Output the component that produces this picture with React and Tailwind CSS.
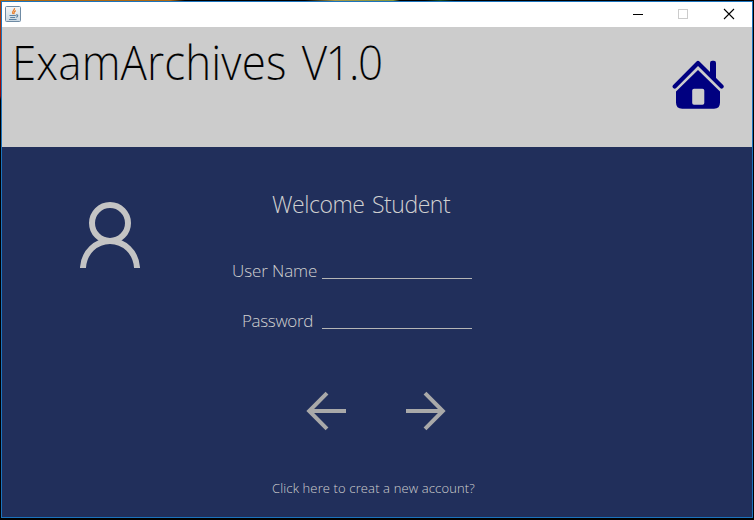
const lightFont = "font-['Open_Sans','Noto_Sans',sans-serif] font-light whitespace-nowrap";

function JavaIcon() {
  return (
    <svg width="16" height="16" viewBox="0 0 16 16" fill="none">
      <defs>
        <linearGradient id="java" x1="0" y1="0" x2="0" y2="1">
          <stop offset="0" stopColor="#f4f6f7" />
          <stop offset="1" stopColor="#c9d7e2" />
        </linearGradient>
      </defs>
      <rect x="0.5" y="0.5" width="15" height="15" rx="1" fill="url(#java)" stroke="#6f8ba4" />
      <path d="M9.5 2.2C10 4.6 6 5 7.8 8M10.8 4.6C8 6 9.8 6.6 8.6 8.2" stroke="#e8802f" strokeWidth="1.3" />
      <path d="M4.5 9.5H10.8M5.2 11.5H10M4 13.5H11.5M11 9C13.6 8.4 13 11 10.8 11.3" stroke="#5c82a3" strokeWidth="1.1" />
    </svg>
  );
}

function TitleBar() {
  return (
    <div className="flex h-[25px] shrink-0 items-start bg-white pl-[3px]">
      <div className="mt-1 grow"><JavaIcon /></div>
      <svg width="137" height="25" viewBox="0 0 137 25" fill="none" shapeRendering="crispEdges">
        <path d="M18 12.5H28" stroke="#000" />
        <rect x="63.5" y="7.5" width="9" height="9" stroke="#ccc" />
        <path d="M109 7L119 17M119 7L109 17" stroke="#000" strokeWidth="1.1" shapeRendering="auto" />
      </svg>
    </div>
  );
}

function HomeIcon() {
  return (
    <svg width="52" height="49" viewBox="-0.5 0 52 49" fill="#000080">
      <path d="M2.2 26.5L25.5 3L49.1 26.5" fill="none" stroke="#000080" strokeWidth="4.2" strokeLinecap="round" strokeLinejoin="round" />
      <path d="M37.5 16V3Q37.5 0.8 39.7 0.8H41.3Q43.5 0.8 43.5 3V22Z" />
      <path fillRule="evenodd" d="M25.5 10L47.5 31.5V42.5Q47.5 48.7 41.5 48.7H9.7Q3.5 48.7 3.5 42.5V31.5ZM21.5 28.7Q19.7 28.7 19.7 30.5V43Q19.7 44.8 21.5 44.8H30Q31.8 44.8 31.8 43V30.5Q31.8 28.7 30 28.7Z" />
    </svg>
  );
}

function UserIcon() {
  return (
    <svg width="60" height="66" viewBox="0 0 60 66" fill="none" stroke="#c4c4c4" strokeWidth="6">
      <circle cx="30" cy="21" r="18" />
      <path d="M3 66V65.5C4 50 16 39 30 39C44 39 56 50 57 65.5V66" />
    </svg>
  );
}

function ArrowIcon({ flip }) {
  return (
    <svg width="40" height="40" viewBox="0 0 40 40" fill="none" stroke="#a9a9a9" strokeWidth="4" className={flip ? "-scale-x-100" : ""}>
      <path d="M40 20H3M21 2.2L3.2 20L21 37.8" />
    </svg>
  );
}

function Field({ label, type, className }) {
  return (
    <label className={`flex h-[50px] ${lightFont} text-[17px] leading-6 text-[#d0d0d0]`}>
      <span className={`w-[90px] shrink-0 ${className}`}>{label}</span>
      <input type={type} className="h-5 w-[150px] border-b border-[#b5b5b5] bg-transparent outline-none" />
    </label>
  );
}

export default function App() {
  return (
    <div className="flex h-[520px] w-[754px] flex-col overflow-hidden bg-black">
      <div className="h-px shrink-0 bg-[linear-gradient(90deg,#b06a12_0px,#b06a12_170px,#000_185px,#000_305px,#a69848_335px,#86963b_393px,#000_400px,#000_425px,#174b20_440px,#000_455px)]" />
      <div className="flex h-[517px] shrink-0">
        <div className="w-px bg-[linear-gradient(#b0440c_0px,#a20c08_75px,#8c0804_95px,#000_99px)]" />
        <div className="flex w-[752px] flex-col border border-[#1b73bd] bg-[#212f5b]">
          <TitleBar />
          <header className="flex h-[120px] shrink-0 justify-between bg-[#ccc] pl-[10px] pr-7">
            <h1 className={`${lightFont} mt-[3px] origin-left scale-x-[0.915] text-[48px] leading-[64px] text-black [-webkit-text-stroke:0.15px_#ccc] [word-spacing:4px]`}>
              <span className="tracking-[0.12px]">ExamArchives </span>
              <span className="tracking-[-1.6px]">V1.0</span>
            </h1>
            <div className="mt-[33px]"><HomeIcon /></div>
          </header>
          <main className="flex grow pl-[78px]">
            <div className="mt-[55px] w-[152px]"><UserIcon /></div>
            <section className="flex w-[244px] flex-col">
              <h2 className={`${lightFont} ml-10 mt-[39px] text-[23px] leading-9 tracking-[-0.46px] text-[#d0d0d0] [word-spacing:2px]`}>Welcome Student</h2>
              <div className="mt-[37px]">
                <Field label="User Name" type="text" className="tracking-[-0.1px]" />
                <Field label="Password" type="password" className="pl-[10px] tracking-[-0.35px]" />
              </div>
              <div className="ml-[74px] mt-8 flex gap-[60px]">
                <ArrowIcon />
                <ArrowIcon flip />
              </div>
              <a className={`${lightFont} ml-10 mt-[47px] text-[13px] leading-5 tracking-[0.13px] text-[#d0d0d0]`}>Click here to creat a new account?</a>
            </section>
          </main>
        </div>
        <div className="w-px bg-black" />
      </div>
    </div>
  );
}
